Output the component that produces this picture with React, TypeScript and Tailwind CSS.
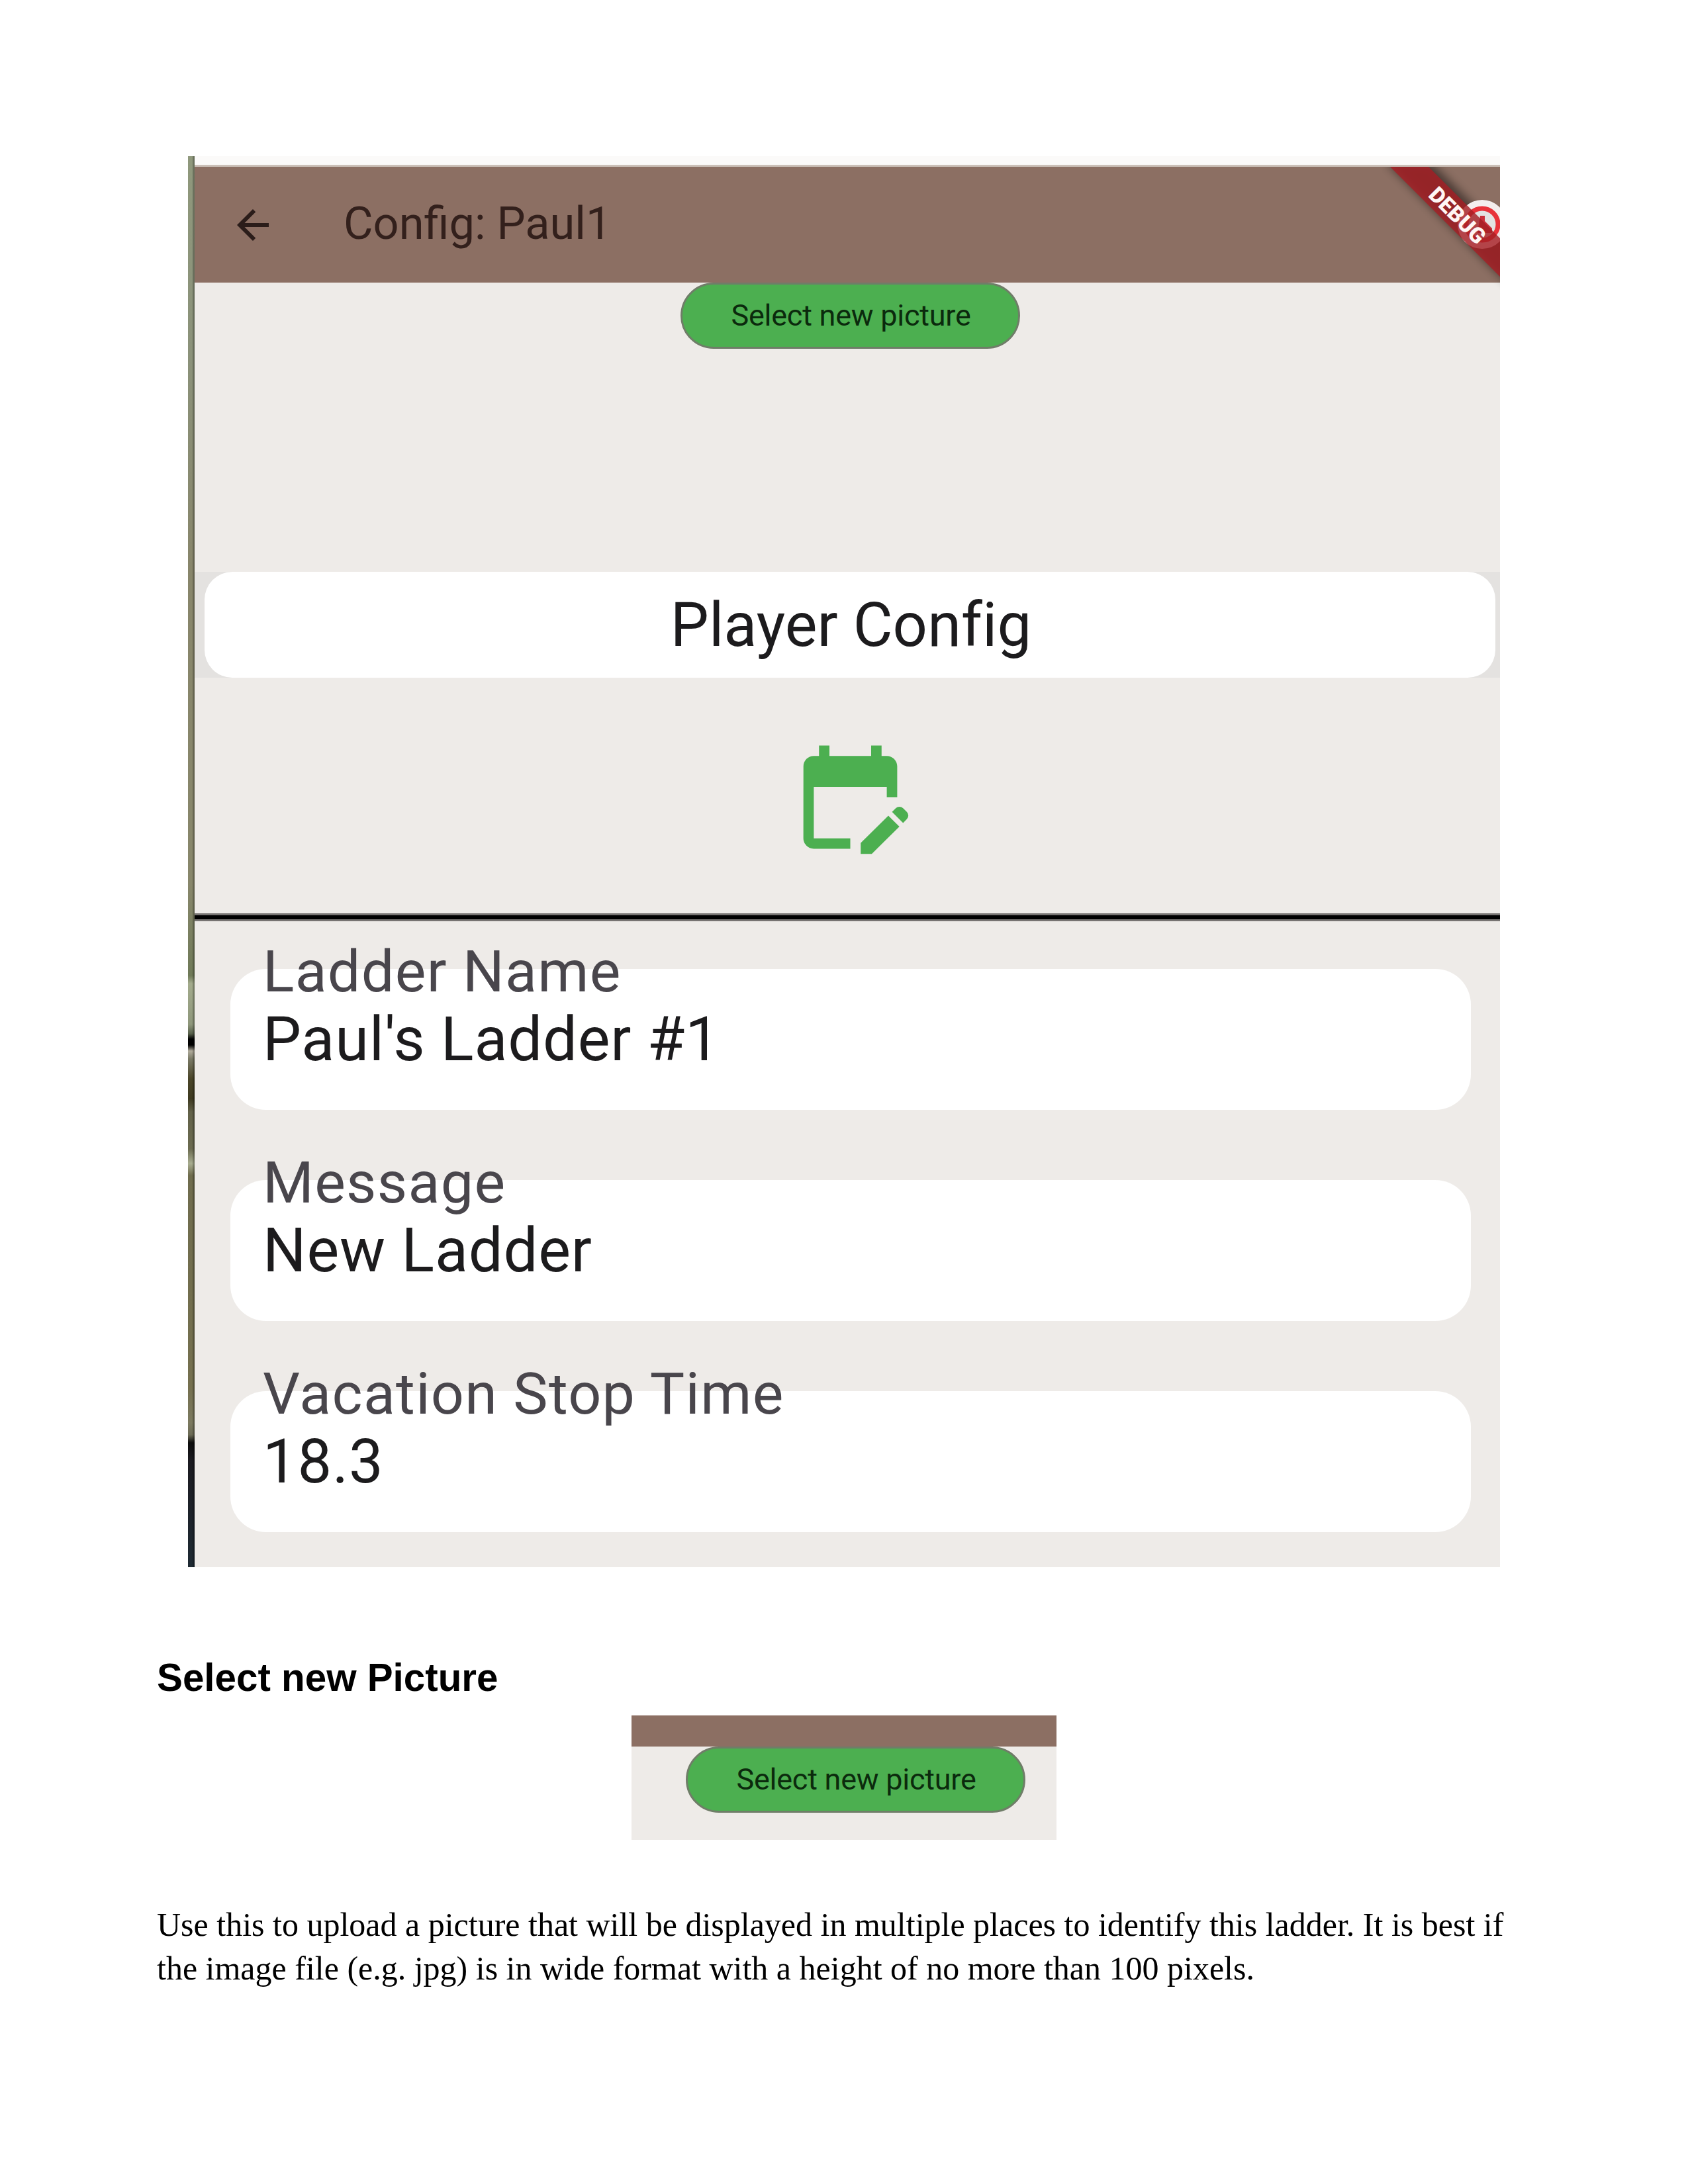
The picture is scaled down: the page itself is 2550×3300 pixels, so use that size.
import { MdEditCalendar, MdArrowBack } from "react-icons/md";

const fields = [
  { label: "Ladder Name", value: "Paul's Ladder #1" },
  { label: "Message", value: "New Ladder" },
  { label: "Vacation Stop Time", value: "18.3" },
];

function PictureButton() {
  return (
    <button className="flex h-[100px] w-[513px] items-center justify-center rounded-full border-[3px] border-[#6f7d68] bg-[#4caf50] font-[Roboto,sans-serif] text-[45px] leading-none text-[#0b2a0d]">
      <span className="block pb-[1px] pl-[2px] tracking-[-0.25px] whitespace-nowrap">Select new picture</span>
    </button>
  );
}

function DebugBanner() {
  return (
    <svg className="absolute top-0 right-0" width="190" height="200" viewBox="2076 252 190 200">
      <defs>
        <filter id="soft" x="-20%" y="-20%" width="140%" height="140%">
          <feGaussianBlur stdDeviation="7" />
        </filter>
      </defs>
      <path d="M2094 246 L2163 246 L2280 363 L2280 432 Z" fill="#000" opacity="0.45" filter="url(#soft)" />
      <circle cx="2239" cy="339" r="37" fill="#f4eeee" />
      <circle cx="2239" cy="339" r="24" fill="#e3e3e2" stroke="#e8323a" strokeWidth="7" />
      <path d="M2236 326 h7 v8 l11 11 v7 h-22 z" fill="#c9303a" />
      <circle cx="2268" cy="357" r="7" fill="#f0dfe2" />
      <path d="M2099 251 L2157 251 L2268 362 L2268 420 Z" fill="#a61f25" fillOpacity="0.82" />
      <text
        transform="translate(2202 325) rotate(45)"
        textAnchor="middle"
        dy="12"
        className="fill-[#fff6f4] font-[Roboto,sans-serif] text-[33px] font-black"
      >
        DEBUG
      </text>
    </svg>
  );
}

export default function App() {
  return (
    <main className="flex h-[3300px] w-[2550px] flex-col overflow-hidden bg-white pt-[236px] text-black">
      <section className="ml-[284px] flex h-[2132px] w-[1982px]">
        <div className="w-[10px] shrink-0 border-r-[3px] border-black/25 bg-[linear-gradient(to_bottom,#8f987c_0px,#8b927a_300px,#88866b_620px,#88876b_1100px,#6f7a58_1238px,#a3ab8c_1250px,#8e977b_1312px,#57604a_1326px,#000_1334px,#000_1343px,#b0ab9b_1352px,#7a7a66_1364px,#4a4528_1394px,#3e3a20_1424px,#626148_1444px,#6b6b50_1500px,#a8ad90_1522px,#6f6c4d_1540px,#75704f_1860px,#7c7a60_1914px,#6b6a55_1932px,#0c0c0c_1944px,#1b1a20_1970px,#1e2a33_2132px)]" />
        <div className="flex grow flex-col bg-[#eeebe8] font-[Roboto,sans-serif]">
          <div className="h-[13px] shrink-0 bg-[#fbfaf9]" />
          <div className="h-[3px] shrink-0 bg-[#cbc0b8]" />
          <header className="relative flex h-[175px] shrink-0 items-center bg-[#8c6f63] pl-[52px]">
            <MdArrowBack className="size-[72px] text-[#2b1d1a]" />
            <h1 className="ml-[101px] pb-[3px] text-[68.5px] leading-none whitespace-nowrap text-[#33201c]">Config: Paul1</h1>
            <DebugBanner />
          </header>
          <div className="flex h-[437px] shrink-0 justify-center pl-[9px]">
            <PictureButton />
          </div>
          <div className="flex h-[160px] shrink-0 bg-[#e4e2e0] pr-[7px] pl-[15px]">
            <div className="flex grow items-center justify-center rounded-[42px] bg-white pt-[2px] pl-[3px] text-[92px] leading-none tracking-[0.05px] text-[#1c1b1d]">
              Player Config
            </div>
          </div>
          <div className="flex h-[356px] shrink-0 justify-center pt-[87px] pl-[9px]">
            <MdEditCalendar className="h-[187px] w-[189px] text-[#4caf50]" preserveAspectRatio="none" />
          </div>
          <div className="h-[12px] shrink-0 border-y-[3px] border-[#777472] bg-black" />
          <div className="flex flex-col gap-[106px] pt-[72px] pr-[44px] pl-[54px]">
            {fields.map((f) => (
              <div key={f.label} className="h-[213px] rounded-[54px] bg-white pl-[49px] whitespace-nowrap">
                <div className="-mt-[41px] h-[103px] text-[88px] leading-[90px] tracking-[1.3px] text-[#49464c]">{f.label}</div>
                <div className="text-[92px] leading-[90px] tracking-[0.8px] text-[#1c1b1d]">{f.value}</div>
              </div>
            ))}
          </div>
        </div>
      </section>
      <h2 className="mt-[134px] ml-[237px] font-['Liberation_Sans',sans-serif] text-[58.33px] leading-[66px] font-bold">Select new Picture</h2>
      <section className="mt-[24px] ml-[954px] flex h-[188px] w-[642px] flex-col bg-[#eeebe8]">
        <div className="h-[47px] bg-[#8c6f63]" />
        <div className="ml-[82px]">
          <PictureButton />
        </div>
      </section>
      <p className="mt-[95px] ml-[237px] font-['Liberation_Serif',serif] text-[50px] leading-[66px] whitespace-nowrap">
        Use this to upload a picture that will be displayed in multiple places to identify this ladder. It is best if
        <br />
        the image file (e.g. jpg) is in wide format with a height of no more than 100 pixels.
      </p>
    </main>
  );
}
